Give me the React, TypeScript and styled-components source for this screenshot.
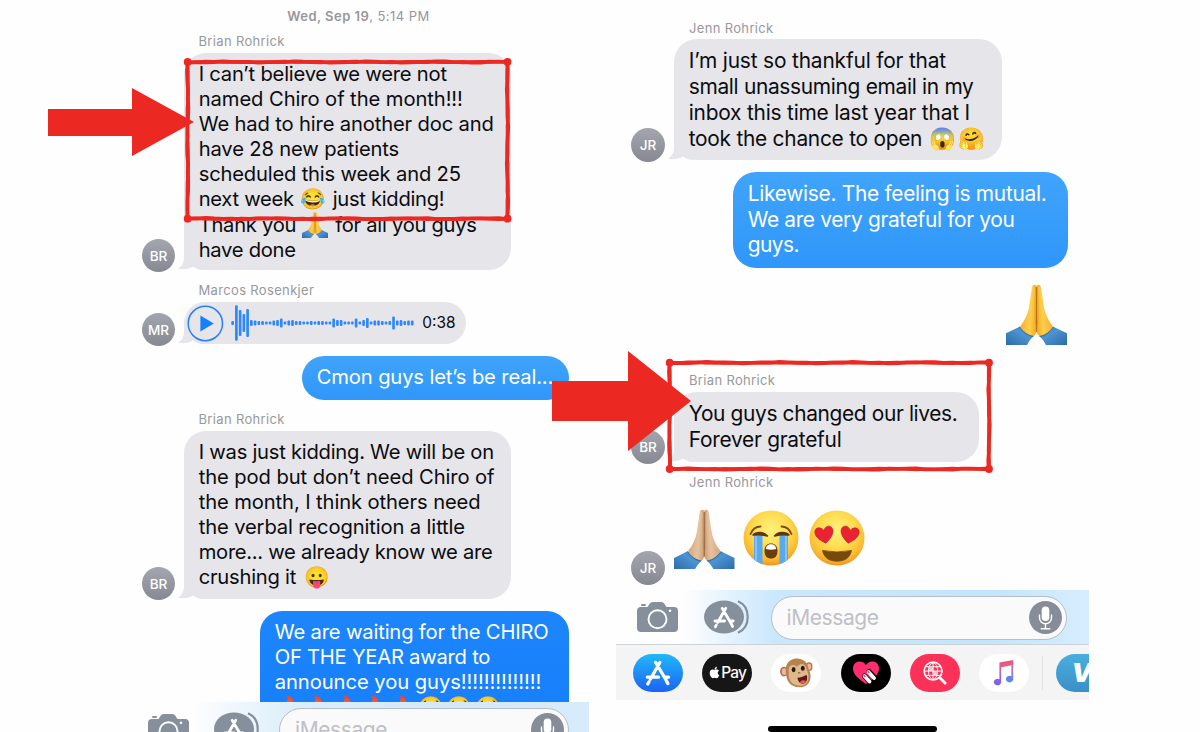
import React from "react";
import styled, { createGlobalStyle, css } from "styled-components";
import { FaApple } from "react-icons/fa";

const GlobalStyle = createGlobalStyle`
  body { margin: 0; background: #fff; overflow: hidden; }
  *, *::before, *::after { box-sizing: border-box; }
  svg { display: block; }
`;

const RED = "#eb2822";

const Stage = styled.main`
  position: relative;
  width: 1200px;
  height: 732px;
  overflow: hidden;
  display: flex;
  gap: 27px;
  padding-left: 127px;
  background: #fefefe;
  font-family: Inter, "Liberation Sans", sans-serif;
  color: #0c0c0e;
`;

const Phone = styled.section<{ $width: number }>`
  width: ${(p) => p.$width}px;
  height: 732px;
  overflow: hidden;
  display: flex;
  flex-direction: column;
`;

const Thread = styled.div<{ $height: number; $top: number; $left: number; $right: number; $font: number; $line: number }>`
  height: ${(p) => p.$height}px;
  flex: none;
  overflow: hidden;
  padding: ${(p) => p.$top}px ${(p) => p.$right}px 0 ${(p) => p.$left}px;
  font-size: ${(p) => p.$font}px;
  line-height: ${(p) => p.$line}px;
`;

const Timestamp = styled.div`
  height: 16px;
  padding-left: 6px;
  text-align: center;
  font-size: 13px;
  line-height: 17px;
  letter-spacing: 0.46px;
  color: #97979b;
  margin-bottom: -3px;
  b { font-weight: 600; }
`;

const Message = styled.div<{ $gap?: number }>`
  margin-top: ${(p) => p.$gap ?? 12}px;
`;

const Sender = styled.div<{ $below?: number; $indent?: number }>`
  height: 16px;
  margin: 0 0 ${(p) => p.$below ?? 4}px ${(p) => p.$indent ?? 56.5}px;
  font-size: 13px;
  line-height: 16px;
  letter-spacing: 0.34px;
  color: #98989c;
`;

const Received = styled.div`
  display: flex;
  align-items: flex-end;
  gap: 9px;
`;

const Sent = styled.div`
  display: flex;
  justify-content: flex-end;
`;

const Avatar = styled.div<{ $size?: number; $drop?: number }>`
  flex: none;
  width: ${(p) => p.$size ?? 33}px;
  height: ${(p) => p.$size ?? 33}px;
  margin-bottom: -${(p) => p.$drop ?? 2}px;
  border-radius: 50%;
  background: linear-gradient(#a3a6ae, #868992);
  color: #fff;
  font-size: 13.5px;
  font-weight: 500;
  line-height: 34px;
  text-align: center;
`;

const Bubble = styled.div<{ $width: number; $height: number; $tone?: "grey" | "sky" | "blue"; $radius?: number }>`
  position: relative;
  isolation: isolate;
  width: ${(p) => p.$width}px;
  height: ${(p) => p.$height}px;
  padding: 9.4px 0 0 14.7px;
  border-radius: ${(p) => p.$radius ?? 22}px;
  background: #e5e5ea;
  ${(p) => p.$tone === "sky" && css`background: linear-gradient(#40a4fb, #2f97fa); color: #fff;`}
  ${(p) => p.$tone === "blue" && css`background: linear-gradient(#1d86fb, #147dfb); color: #fff;`}
`;

const TailShape = styled.svg`
  position: absolute;
  z-index: -1;
  left: -6px;
  bottom: 0;
`;

const Line = styled.div<{ $track: number }>`
  white-space: pre;
  letter-spacing: ${(p) => p.$track}px;
`;

const Emoji = styled.span<{ $before?: number; $cell: number; $size?: number }>`
  display: inline-block;
  width: ${(p) => p.$cell}px;
  margin-left: ${(p) => p.$before ?? 0}px;
  height: 1em;
  line-height: 1em;
  letter-spacing: 0;
  font-family: "Noto Color Emoji", sans-serif;
  font-size: ${(p) => p.$size ?? 20.5}px;
  svg { display: inline-block; vertical-align: -6px; }
`;

const VoiceBubble = styled(Bubble)`
  display: flex;
  align-items: center;
  padding: 0 10px 0 3px;
  font-size: 15.4px;
  gap: 7.5px;
`;

const EmojiRow = styled.div<{ $gap?: number }>`
  display: flex;
  align-items: flex-end;
  gap: ${(p) => p.$gap ?? 0}px;
`;

const Composer = styled.div<{ $pad: string; $faint?: boolean }>`
  flex: none;
  display: flex;
  align-items: flex-start;
  height: 55px;
  padding: ${(p) => p.$pad};
  border-bottom: 1px solid #ccd2d8;
  background: linear-gradient(
    90deg,
    rgba(255, 255, 255, 0) 14%,
    ${(p) => (p.$faint ? "#dceefb 36%, #d2e8fa 70%, #d8ebfb" : "#c9e7fd 34%, #c3e5fd 80%, #d6edfe")} 100%
  );
`;

const Field = styled.div<{ $width: number }>`
  display: flex;
  align-items: center;
  justify-content: space-between;
  width: ${(p) => p.$width}px;
  height: 43.5px;
  padding: 0 4px 0 15px;
  border: 1.5px solid #b7bec6;
  border-radius: 22px;
  background: #fafafb;
  color: #bfc0c5;
  font-size: 21px;
  letter-spacing: -0.4px;
`;

const Tray = styled.div`
  flex: none;
  display: flex;
  align-items: center;
  gap: 19.2px;
  height: 55px;
  padding-left: 17px;
  background: #f4f4f5;
  overflow: hidden;
`;

const AppPill = styled.div<{ $bg: string }>`
  flex: none;
  display: flex;
  align-items: center;
  justify-content: center;
  width: 50px;
  height: 38px;
  border-radius: 19px;
  background: ${(p) => p.$bg};
  color: #fff;
`;

const PayLabel = styled.span`
  display: flex;
  align-items: center;
  font-size: 15.5px;
  font-weight: 500;
  letter-spacing: -0.9px;
`;

const Divider = styled.div`
  flex: none;
  width: 1px;
  height: 34px;
  margin: 0 -6px 0 -6px;
  background: #e2e2e5;
`;

const VideoMark = styled.span`
  font-size: 26px;
  font-weight: 900;
  font-style: italic;
  line-height: 26px;
  padding: 1px 0 0 1px;
`;

const HomeBar = styled.div`
  width: 169px;
  height: 8px;
  margin: 26px 0 0 152px;
  border-radius: 4px;
  background: #000;
`;

const ComposerIcons = styled.div<{ $gap: number; $after: number }>`
  display: flex;
  gap: ${(p) => p.$gap}px;
  margin-right: ${(p) => p.$after}px;
`;

const CameraSlot = styled.div`
  padding-top: 6px;
`;

const StoreSlot = styled.div`
  padding-top: 4px;
`;

const BigHands = styled.div`
  margin-right: 1px;
`;

const FaceSlot = styled.div<{ $nudge?: number }>`
  margin: 0 0 3px ${(p) => p.$nudge ?? 0}px;
`;

const Markup = styled.svg`
  position: absolute;
  inset: 0;
  pointer-events: none;
`;

const Tail = () => (
  <TailShape width="26" height="22" viewBox="0 0 26 22">
    <path d="M6 0V9C6 15 4 18 0 20.7C6 22 12 20.5 15 18.5C18 21 22 22 26 22V0Z" fill="#e5e5ea" />
  </TailShape>
);

const Hands = ({ size, light = false }: { size: number; light?: boolean }) => {
  const id = React.useId().replace(/:/g, "");
  const skin = light ? ["#e6c3a0", "#cfa27a", "#96653f"] : ["#ffcf4a", "#f3ab29", "#b9720d"];
  const half = (
    <>
      <path
        d="M30.2 2.2C29.2 .2 26.7 .2 26 2.6C25.4 4 25.1 6 24.9 8L22.8 22C22 28 19 35.5 14 41.5L20.5 54C25.5 53.5 29 51 30.2 46.5Z"
        fill={`url(#${id}s)`}
      />
      <path d="M25.8 3C27 1.4 28.5 1.8 28.9 3.5L28.6 21C28.5 27 28.7 33 29 40" fill="none" stroke={skin[2]} strokeOpacity=".3" strokeWidth=".8" />
      <path d="M0 48.5L13.5 42C16.5 47 21 50.5 27 51.5C24 54.5 21.8 57.5 20.8 60H0Z" fill={`url(#${id}c)`} />
      <path d="M13.5 42C16.5 47 21 50.5 27 51.5" fill="none" stroke="#245b92" strokeWidth=".8" />
    </>
  );
  return (
    <svg width={size} height={size} viewBox="0 0 60 60" role="img" aria-label={light ? "🙏🏼" : "🙏"}>
      <defs>
        <linearGradient id={`${id}s`} x1="0" x2="1" y1=".3" y2=".5">
          <stop offset="0" stopColor={skin[1]} />
          <stop offset=".65" stopColor={skin[0]} />
          <stop offset="1" stopColor={skin[1]} />
        </linearGradient>
        <linearGradient id={`${id}c`} x1="0" x2="1" y1="1" y2="0">
          <stop offset="0" stopColor="#2b6aa8" />
          <stop offset=".6" stopColor="#4d94d2" />
          <stop offset="1" stopColor="#2f6ea9" />
        </linearGradient>
      </defs>
      <g>{half}</g>
      <g transform="translate(60 0) scale(-1 1)">{half}</g>
      <path d="M30 3V47" stroke={skin[2]} strokeWidth="1.1" />
    </svg>
  );
};

const FaceBase = ({ id }: { id: string }) => (
  <>
    <defs>
      <radialGradient id={id} cx=".5" cy=".36" r=".66">
        <stop offset="0" stopColor="#fff27c" />
        <stop offset=".5" stopColor="#fedb50" />
        <stop offset=".82" stopColor="#fbb830" />
        <stop offset="1" stopColor="#ee8d1c" />
      </radialGradient>
    </defs>
    <circle cx="28" cy="28" r="27.5" fill={`url(#${id})`} />
  </>
);

const Sobbing = () => (
  <svg width="56" height="56" viewBox="0 0 56 56" role="img" aria-label="😭">
    <FaceBase id="sobFace" />
    <clipPath id="sobClip"><circle cx="28" cy="28" r="27.5" /></clipPath>
    <g clipPath="url(#sobClip)">
      <path d="M11 25H19.5V56H11ZM36.5 25H45V56H36.5Z" fill="#5ba9ec" />
      <path d="M13 26V56M43 26V56" stroke="#83c3f5" strokeWidth="2" />
    </g>
    <path d="M7.5 24C10 18 13 16.5 17.5 16.5M48.5 24C46 18 43 16.5 38.5 16.5" fill="none" stroke="#7a4a12" strokeWidth="1.8" strokeLinecap="round" />
    <path d="M10 25C13 21.5 21 21.5 24.5 26C19 24.5 14 24.5 10 25ZM46 25C43 21.5 35 21.5 31.5 26C37 24.5 42 24.5 46 25Z" fill="#5e360d" stroke="#5e360d" strokeLinejoin="round" strokeWidth="1.5" />
    <path d="M21.5 41C21.5 36 24 33.5 28 33.5S34.5 36 34.5 41S32 48.5 28 48.5S21.5 46 21.5 41Z" fill="#6b3c10" />
    <path d="M22.8 39C23.3 35.5 25.3 34.3 28 34.3S32.7 35.5 33.2 39Q28 40.5 22.8 39Z" fill="#fff" />
  </svg>
);

const HEART = "M0 8C-7 3 -9.5 -1 -8.5 -5C-7.5 -8.5 -2.5 -9 0 -4.5C2.5 -9 7.5 -8.5 8.5 -5C9.5 -1 7 3 0 8Z";

const HeartEyes = () => (
  <svg width="56" height="56" viewBox="0 0 56 56" role="img" aria-label="😍">
    <FaceBase id="loveFace" />
    <path d={HEART} transform="translate(15.5 25) rotate(-10) scale(1.04)" fill="#ea2233" stroke="#c51627" strokeWidth=".6" />
    <path d={HEART} transform="translate(40.5 25) rotate(10) scale(1.04)" fill="#ea2233" stroke="#c51627" strokeWidth=".6" />
    <path d="M13.5 40.5Q28 43.5 42.5 40.5C41 48 35.5 51.2 28 51.2S15 48 13.5 40.5Z" fill="#76490c" stroke="#76490c" strokeWidth=".8" strokeLinejoin="round" />
  </svg>
);

const CameraIcon = () => (
  <svg width="41" height="30" viewBox="0 0 41 30">
    <rect x="4" y="2" width="5" height="2" rx="1" fill="#86909c" />
    <path d="M4 5H10.5L12.8 1.6Q13.8 0 15.5 0H24.5Q26.2 0 27.2 1.6L29.5 5H37Q41 5 41 9V26Q41 30 37 30H4Q0 30 0 26V9Q0 5 4 5Z" fill="#86909c" />
    <circle cx="20.5" cy="17.3" r="9" fill="none" stroke="#fff" strokeWidth="1.9" />
    <circle cx="33" cy="8.8" r="1.3" fill="#fff" />
  </svg>
);

const StoreStrokes = () => (
  <g fill="none" stroke="#fff" strokeWidth="3.3" strokeLinecap="round">
    <path d="M14.3 2.5L5 19M3.4 22L2.3 23.8M10.2 2.5L20 19L22.3 23.5M1.8 17.2H13M18.8 17.2H23" />
  </g>
);

const StoreButton = () => (
  <svg width="45" height="34" viewBox="0 0 45 34">
    <path d="M34 1.2C40.500 4 43.700 9.500 43.700 17S40.500 30 34 32.800" fill="none" stroke="#86909c" strokeWidth="2.2" />
    <ellipse cx="20" cy="17" rx="20" ry="16.5" fill="#86909c" />
    <g transform="translate(9.4 6.2) scale(.86)"><StoreStrokes /></g>
  </svg>
);

const MicButton = () => (
  <svg width="33" height="33" viewBox="0 0 33 33">
    <circle cx="16.5" cy="16.5" r="16.5" fill="#878d98" />
    <rect x="12.7" y="5.5" width="7.6" height="14.5" rx="3.8" fill="#fff" />
    <path d="M10.5 14V16.8A6 6 0 0 0 22.5 16.8V14M16.5 23V27.6M12.3 27.8H20.7" fill="none" stroke="#fff" strokeWidth="1.4" strokeLinecap="round" />
  </svg>
);

const MonkeyIcon = () => (
  <svg width="33" height="30" viewBox="0 0 34 31">
    <ellipse cx="4" cy="14" rx="4" ry="5" fill="#a87442" />
    <ellipse cx="4.3" cy="14" rx="2.5" ry="3.5" fill="#f3b5a2" />
    <ellipse cx="30" cy="9" rx="3.5" ry="4.5" fill="#a87442" />
    <ellipse cx="30" cy="9" rx="2.2" ry="3.2" fill="#f3b5a2" />
    <path d="M6 14C5 5 11 0 18 .5C26 1 29 6 29.5 12C33 17 33 29 22 30.2C11 31 6 24 6 14Z" fill="#b5834e" />
    <path d="M9 14C8 8 13 5 17.500 9C21 4 27 6 27.500 12C31 19 30 28 22 28.700C13 29 8 24 9 14Z" fill="#dfb88c" />
    <ellipse cx="14" cy="12" rx="2" ry="2.6" fill="#2c1a10" />
    <ellipse cx="23.5" cy="10.5" rx="2" ry="2.6" fill="#2c1a10" />
    <path d="M18.5 15.5L21 15.2" stroke="#7b5030" strokeWidth="1.2" />
    <path d="M18 20.5C21 20 25 18.5 27.5 17.5C29 22 27 26.5 23.5 26.5C20 26.5 18.500 24 18 20.5Z" fill="#5b1a14" />
    <path d="M20.5 25C22 22.8 25.5 22.5 26.7 24C25.5 27 22 27 20.5 25Z" fill="#e8595c" />
  </svg>
);

const TouchIcon = () => (
  <svg width="26" height="24" viewBox="0 0 26 24">
    <path d="M13 23C4 17 0 12.5 0 7.5C0 0 9-2 13 4C17-2 26 0 26 7.5C26 12.5 22 17 13 23Z" fill="#ff2d6f" />
    <path d="M11.5 15L17 21M16 10.5L21.5 16.5" stroke="#000" strokeWidth="5" strokeLinecap="round" />
    <path d="M11.5 15L16.500 20.500M15.500 11L21 17" stroke="#fff" strokeWidth="3.8" strokeLinecap="round" />
    <path d="M10.8 14.2L12 15.500M14.800 10.200L16 11.500" stroke="#ff2d6f" strokeWidth="1.4" strokeLinecap="round" />
  </svg>
);

const ImagesIcon = () => (
  <svg width="24" height="24" viewBox="0 0 25 25" fill="none" stroke="#fff" strokeLinecap="round">
    <circle cx="10.5" cy="10.5" r="9.3" strokeWidth="1.7" />
    <ellipse cx="10.5" cy="10.5" rx="4.8" ry="8.5" strokeWidth="1" />
    <path d="M10.5 2V19M2 10.5H19M3.5 6H17.5M3.5 15H17.5" strokeWidth="1" />
    <path d="M6.5 7H10V10H6.5ZM11 11H14V14.5H11Z" fill="#fff" fillOpacity=".7" strokeWidth=".5" />
    <path d="M17.5 17.5L23 23" strokeWidth="3" />
  </svg>
);

const MusicIcon = () => (
  <svg width="21" height="26" viewBox="0 0 21 26">
    <defs>
      <linearGradient id="note" x1="0" x2="0" y1="0" y2="1">
        <stop offset="0" stopColor="#f0556c" />
        <stop offset=".3" stopColor="#dd5f9c" />
        <stop offset=".6" stopColor="#a067dc" />
        <stop offset="1" stopColor="#7a5cf0" />
      </linearGradient>
      <linearGradient id="noteRight" x1="0" x2="0" y1="0" y2="1">
        <stop offset="0" stopColor="#e0607c" />
        <stop offset=".45" stopColor="#b06fd0" />
        <stop offset="1" stopColor="#3f94ee" />
      </linearGradient>
    </defs>
    <path d="M6.4 2.5L20.2 0V5L8.200 7.300V22.300A3.700 3.200 0 1 1 6.400 19.300Z" fill="url(#note)" />
    <path d="M20.200 2V19.300A3.700 3.200 0 1 1 18.400 16.300V3Z" fill="url(#noteRight)" />
  </svg>
);

const PlayIcon = () => (
  <svg width="37" height="37" viewBox="0 0 37 37">
    <circle cx="18.5" cy="18.5" r="17.3" fill="none" stroke="#2480fc" strokeWidth="1.5" />
    <path d="M13.5 10.5V26.5L27 18.5Z" fill="#177efc" />
  </svg>
);

const WAVE = [
  4, 36, 26, 18, 28, 6, 5, 4, 4, 3, 3, 5, 6, 9, 3, 5, 6, 4, 4, 3, 3, 4, 3, 4, 4, 3, 3, 9, 6, 6, 3, 3, 3, 9, 3, 6, 10,
  3, 5, 5, 4, 3, 4, 13, 5, 6, 4, 5, 5,
];

const Waveform = () => (
  <svg width="185" height="38" viewBox="0 0 185 38">
    {WAVE.map((h, i) => (
      <rect key={i} x={0.3 + i * 3.77} y={19 - h / 2} width={2.7} height={h} rx="1" fill="#2f88fb" />
    ))}
  </svg>
);

// Marker-style frame: every side wanders slightly around its straight edge.
const roughSide = (x1: number, y1: number, x2: number, y2: number, seed: number) => {
  const horizontal = y1 === y2;
  const steps = Math.round((horizontal ? x2 - x1 : y2 - y1) / 9);
  return Array.from({ length: steps + 1 }, (_, i) => {
    const t = i / steps;
    const w = 0.45 * Math.sin(i * 0.8 + seed) + 0.3 * Math.sin(i * 2.3 + seed * 2);
    const x = x1 + (x2 - x1) * t + (horizontal ? 0 : w);
    const y = y1 + (y2 - y1) * t + (horizontal ? w : 0);
    return `${i ? "L" : "M"}${x.toFixed(1)} ${y.toFixed(1)}`;
  }).join("");
};

const RoughFrame = ({ x1, y1, x2, y2 }: { x1: number; y1: number; x2: number; y2: number }) => (
  <g fill="none" stroke={RED} strokeLinejoin="round" strokeLinecap="round">
    {[0, 1.7].map((shift) => (
      <path
        key={shift}
        strokeWidth={shift ? 3.2 : 3.8}
        d={
          roughSide(x1, y1, x2, y1, 1 + shift) +
          roughSide(x2, y1, x2, y2, 2 + shift) +
          roughSide(x1, y2, x2, y2, 3 + shift) +
          roughSide(x1, y1, x1, y2, 4 + shift)
        }
      />
    ))}
    {[[x1, y1], [x2, y1], [x1, y2], [x2, y2]].map(([cx, cy]) => (
      <circle key={`${cx}-${cy}`} cx={cx} cy={cy} r="3.9" fill={RED} stroke="none" />
    ))}
  </g>
);

const REACTIONS = ["🔥", "🔥", "🔥", "🔥", "🔥", "😂", "😂", "😂"];

const LeftPhone = () => (
  <Phone $width={462}>
    <Thread $height={702} $top={8} $left={15} $right={20} $font={20.2} $line={24.9}>
      <Timestamp><b>Wed, Sep 19</b>, 5:14 PM</Timestamp>
      <Message>
        <Sender>Brian Rohrick</Sender>
        <Received>
          <Avatar>BR</Avatar>
          <Bubble $width={327} $height={217}>
            <Tail />
            <Line $track={-0.22}>I can’t believe we were not</Line>
            <Line $track={-0.08}>named Chiro of the month!!!</Line>
            <Line $track={-0.15}>We had to hire another doc and</Line>
            <Line $track={-0.16}>have 28 new patients</Line>
            <Line $track={-0.19}>scheduled this week and 25</Line>
            <Line $track={-0.3}>next week<Emoji $before={6.5} $cell={32.5}>😂</Emoji>just kidding!</Line>
            <Line $track={-0.28}>Thank you<Emoji $before={5.5} $cell={33.5}><Hands size={26} /></Emoji>for all you guys</Line>
            <Line $track={-0.28}>have done</Line>
          </Bubble>
        </Received>
      </Message>
      <Message>
        <Sender>Marcos Rosenkjer</Sender>
        <Received>
          <Avatar>MR</Avatar>
          <VoiceBubble $width={281.5} $height={42}>
            <Tail />
            <PlayIcon />
            <Waveform />
            0:38
          </VoiceBubble>
        </Received>
      </Message>
      <Message>
        <Sent>
          <Bubble $width={267} $height={43.5} $tone="sky">
            <Line $track={-0.14}>Cmon guys let’s be real...</Line>
          </Bubble>
        </Sent>
      </Message>
      <Message $gap={11.5}>
        <Sender>Brian Rohrick</Sender>
        <Received>
          <Avatar $drop={1}>BR</Avatar>
          <Bubble $width={327} $height={168}>
            <Tail />
            <Line $track={-0.25}>I was just kidding. We will be on</Line>
            <Line $track={-0.09}>the pod but don’t need Chiro of</Line>
            <Line $track={-0.11}>the month, I think others need</Line>
            <Line $track={-0.13}>the verbal recognition a little</Line>
            <Line $track={-0.3}>more... we already know we are</Line>
            <Line $track={-0.24}>crushing it<Emoji $before={8} $cell={26}>😛</Emoji></Line>
          </Bubble>
        </Received>
      </Message>
      <Message>
        <Sent>
          <Bubble $width={309} $height={140} $tone="blue">
            <Line $track={-0.16}>We are waiting for the CHIRO</Line>
            <Line $track={-0.24}>OF THE YEAR award to</Line>
            <Line $track={-0.06}>announce you guys!!!!!!!!!!!!!!</Line>
            <Line $track={0}>
              {REACTIONS.map((e, i) => <Emoji key={i} $cell={28.4} $before={i ? 0 : 1.5}>{e}</Emoji>)}
            </Line>
          </Bubble>
        </Sent>
      </Message>
    </Thread>
    <Composer $pad="6px 0 0 21px" $faint>
      <ComposerIcons $gap={24.5} $after={20.5}>
        <CameraSlot><CameraIcon /></CameraSlot>
        <StoreSlot><StoreButton /></StoreSlot>
      </ComposerIcons>
      <Field $width={289.5}>iMessage<MicButton /></Field>
    </Composer>
  </Phone>
);

const RightPhone = () => (
  <Phone $width={472.5}>
    <Thread $height={590} $top={7.5} $left={15} $right={20.5} $font={20.9} $line={25.7}>
      <Message>
        <Sender $indent={58} $below={3.5}>Jenn Rohrick</Sender>
        <Received>
          <Avatar $size={34}>JR</Avatar>
          <Bubble $width={328} $height={121} $radius={23}>
            <Tail />
            <Line $track={-0.17}>I’m just so thankful for that</Line>
            <Line $track={-0.31}>small unassuming email in my</Line>
            <Line $track={-0.21}>inbox this time last year that I</Line>
            <Line $track={-0.26}>took the chance to open<Emoji $before={7.5} $cell={29} $size={21.5}>😱</Emoji><Emoji $cell={27} $size={21.5}>🤗</Emoji></Line>
          </Bubble>
        </Received>
      </Message>
      <Message $gap={11.5}>
        <Sent>
          <Bubble $width={335} $height={96.5} $radius={23} $tone="sky">
            <Line $track={-0.29}>Likewise. The feeling is mutual.</Line>
            <Line $track={-0.33}>We are very grateful for you</Line>
            <Line $track={-0.5}>guys.</Line>
          </Bubble>
        </Sent>
      </Message>
      <Message $gap={16}>
        <Sent><BigHands><Hands size={61} /></BigHands></Sent>
      </Message>
      <Message $gap={27}>
        <Sender $indent={58} $below={3.5}>Brian Rohrick</Sender>
        <Received>
          <Avatar $size={34} $drop={2.5}>BR</Avatar>
          <Bubble $width={305} $height={70} $radius={23}>
            <Tail />
            <Line $track={-0.36}>You guys changed our lives.</Line>
            <Line $track={-0.26}>Forever grateful</Line>
          </Bubble>
        </Received>
      </Message>
      <Message $gap={12.5}>
        <Sender $indent={58} $below={18.5}>Jenn Rohrick</Sender>
        <Received>
          <Avatar $size={34} $drop={15.5}>JR</Avatar>
          <EmojiRow $gap={8}>
            <Hands size={60.5} light />
            <FaceSlot><Sobbing /></FaceSlot>
            <FaceSlot $nudge={2}><HeartEyes /></FaceSlot>
          </EmojiRow>
        </Received>
      </Message>
    </Thread>
    <Composer $pad="6px 0 0 21px">
      <ComposerIcons $gap={26} $after={21.5}>
        <CameraSlot><CameraIcon /></CameraSlot>
        <StoreSlot><StoreButton /></StoreSlot>
      </ComposerIcons>
      <Field $width={296.5}>iMessage<MicButton /></Field>
    </Composer>
    <Tray>
      <AppPill $bg="linear-gradient(#21b8f8, #1c63f2)">
        <svg width="26" height="26" viewBox="0 0 25 26"><StoreStrokes /></svg>
      </AppPill>
      <AppPill $bg="#161617"><PayLabel><FaApple size={13} />Pay</PayLabel></AppPill>
      <AppPill $bg="#fff"><MonkeyIcon /></AppPill>
      <AppPill $bg="#000"><TouchIcon /></AppPill>
      <AppPill $bg="#fc3158"><ImagesIcon /></AppPill>
      <AppPill $bg="#fff"><MusicIcon /></AppPill>
      <Divider />
      <AppPill $bg="linear-gradient(#4aaede, #3a8fc8)"><VideoMark>V</VideoMark></AppPill>
    </Tray>
    <HomeBar />
  </Phone>
);

export default function App() {
  return (
    <>
      <GlobalStyle />
      <Stage>
        <LeftPhone />
        <RightPhone />
        <Markup width="1200" height="732" viewBox="0 0 1200 732">
          <RoughFrame x1={187.7} y1={62} x2={507.5} y2={218.7} />
          <RoughFrame x1={669.7} y1={362.7} x2={989} y2={469} />
          <path d="M48 109H132V88L194 122L132 156V136H48Z" fill={RED} />
          <path d="M552 381H628V351L691 401L628 451V421H552Z" fill={RED} />
        </Markup>
      </Stage>
    </>
  );
}
